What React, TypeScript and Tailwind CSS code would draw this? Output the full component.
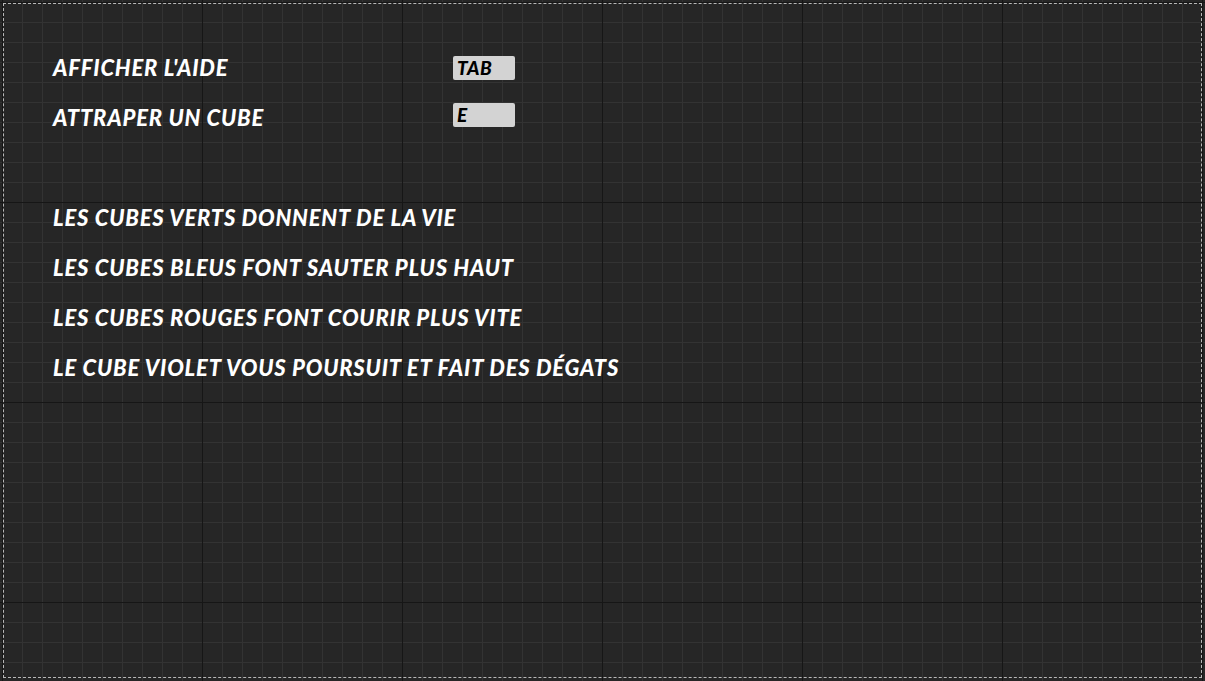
const controls = [
  { label: "AFFICHER L'AIDE", key: "TAB", keyClass: "" },
  { label: "ATTRAPER UN CUBE", key: "E", keyClass: "-mt-[6px]" },
];

const tips = [
  "LES CUBES VERTS DONNENT DE LA VIE",
  "LES CUBES BLEUS FONT SAUTER PLUS HAUT",
  "LES CUBES ROUGES FONT COURIR PLUS VITE",
  "LE CUBE VIOLET VOUS POURSUIT ET FAIT DES DÉGATS",
];

const App = () => {
  return (
    <div
      className="w-[1205px] h-[681px] p-[3px] bg-[#262626] bg-[linear-gradient(to_right,#161616_1px,transparent_1px),linear-gradient(to_bottom,#161616_1px,transparent_1px),linear-gradient(to_right,#333333_1px,transparent_1px),linear-gradient(to_bottom,#333333_1px,transparent_1px)] bg-[size:200px_200px,200px_200px,20px_20px,20px_20px] bg-[position:2px_2px] font-['Lato',sans-serif] italic font-black text-white"
    >
      <div className="h-full border border-dashed border-[#b8b8b8] pl-[49px] pt-[39px]">
        {/* Controls */}
        <div className="flex flex-col">
          {controls.map((c) => (
            <div key={c.label} className="flex items-center h-[50px]">
              <span className="w-[400px] text-[22px] leading-none tracking-[0.8px]">
                {c.label}
              </span>
              <span
                className={`w-[62px] h-[24px] rounded-[2px] bg-[#d3d3d3] text-black text-[19px] leading-[24px] pl-[4px] tracking-[0.5px] ${c.keyClass}`}
              >
                {c.key}
              </span>
            </div>
          ))}
        </div>
        {/* Tips */}
        <div className="flex flex-col mt-[50px]">
          {tips.map((t) => (
            <div key={t} className="flex items-center h-[50px] text-[22px] leading-none tracking-[0.8px]">
              {t}
            </div>
          ))}
        </div>
      </div>
    </div>
  );
};

export default App;
